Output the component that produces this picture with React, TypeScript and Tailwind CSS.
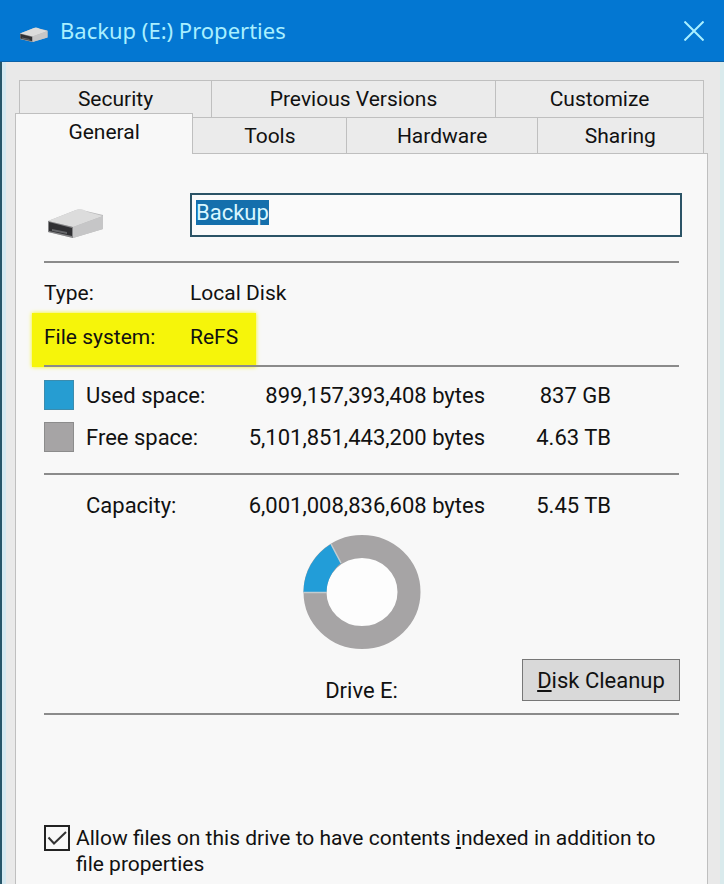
import { useEffect, useRef } from 'react';

interface TabProps {
  label: string;
  active?: boolean;
  className?: string;
}

interface SpaceRow {
  label: string;
  bytes: string;
  size: string;
  swatch: string;
}

const spaceRows: SpaceRow[] = [
  { label: 'Used space:', bytes: '899,157,393,408 bytes', size: '837 GB', swatch: 'bg-[#269dd2] border-[#3c8cae]' },
  { label: 'Free space:', bytes: '5,101,851,443,200 bytes', size: '4.63 TB', swatch: 'bg-[#a6a4a5] border-[#8c8c8c]' },
];

function Tab({ label, active, className = '' }: TabProps) {
  return (
    <button
      type="button"
      role="tab"
      aria-selected={!!active}
      className={`flex items-start justify-center border-[#bfbfbf] pt-0.5 text-[21px] leading-8 ${className}`}
    >
      {label}
    </button>
  );
}

function DriveIcon({ className }: { className: string }) {
  return (
    <svg viewBox="0 0 56 30" className={className} aria-hidden="true">
      <path d="M0 12 L28 1 Q31 0 34 1 L38 2 L55 6 L55 20 L25 29 L0 23 Z" fill="#b9b9ba" />
      <path d="M0 12 L28 1 Q32 -1 36 1 L40 3 L55 7 L25 18 Z" fill="#dcdcdc" />
      <path d="M25 18 L55 7 V20 L25 29 Z" fill="#c6c6c7" />
      <path d="M0 12 L25 18 V29 L0 23 Z" fill="#858587" />
      <path d="M1 13 L24 19 V27 L1 22 Z" fill="#303033" />
      <path d="M4 20 L19 23 V25 L4 22 Z" fill="#66676a" />
    </svg>
  );
}

function UsageRing() {
  return (
    <svg viewBox="0 0 118 114" className="h-[114px] w-[118px]" role="img" aria-label="Disk usage">
      <ellipse cx="59" cy="57" rx="47" ry="45.5" fill="#fdfdfd" stroke="#a6a4a5" strokeWidth="23" />
      <path d="M0.5 57 A58.5 57 0 0 1 28 9 L38 28 Q24 40 23.5 57 Z" fill="#229dd8" />
      <path d="M0.5 57.5 H23.5 M28 9 L38 28" stroke="#c3ccd0" strokeWidth="1.5" fill="none" />
    </svg>
  );
}

export default function App() {
  const nameRef = useRef<HTMLInputElement>(null);

  // The volume label starts out focused and selected
  useEffect(() => {
    nameRef.current?.focus();
    nameRef.current?.select();
  }, []);

  return (
    <div className="flex min-h-screen flex-col border-l-2 border-[#27566a] bg-[#e9e9e9] font-['Roboto',sans-serif] text-[22px] text-[#111]">
      {/* Title bar */}
      <header className="-ml-0.5 flex h-[62px] items-center border-b border-[#0b62a8] bg-[#0377d2] pr-5 pl-5 text-[#a9efff]">
        <DriveIcon className="mt-2 h-4 w-7" />
        <h1 className="ml-3 flex-1 font-['Noto_Sans',sans-serif] text-[22px]">Backup (E:) Properties</h1>
        <button type="button" aria-label="Close">
          <svg viewBox="0 0 20 20" className="h-5 w-5" fill="none" stroke="currentColor" strokeWidth="2">
            <path d="M0.5 0.5 L19.5 19.5 M19.5 0.5 L0.5 19.5" />
          </svg>
        </button>
      </header>

      <main className="flex flex-1 flex-col border-r-4 border-l-4 border-r-[#d9eaec] border-l-[#d5e9f1] pt-[18px] pr-3 pl-[9px]">
        <div role="tablist">
          <div className="mr-1 ml-1 grid h-[37px] grid-cols-[192fr_284fr_208fr] border-t border-l border-[#bfbfbf] bg-[#ebebeb]">
            <Tab label="Security" className="border-r" />
            <Tab label="Previous Versions" className="border-r" />
            <Tab label="Customize" className="border-r" />
          </div>
          <div className="mr-1 grid h-9 grid-cols-[178fr_154fr_190fr_166fr] bg-[#ebebeb]">
            <Tab label="General" active className="relative -mt-1 -mb-px border-t border-r border-l bg-[#f8f8f8]" />
            <Tab label="Tools" className="border-t border-r" />
            <Tab label="Hardware" className="border-t border-r" />
            <Tab label="Sharing" className="border-t border-r" />
          </div>
        </div>

        <section className="flex-1 border-t border-r border-l border-[#bfbfbf] bg-[#f8f8f8] px-7 pt-[39px]">
          <div className="-mr-[3px] flex items-start">
            <DriveIcon className="mt-4 ml-1 h-[30px] w-14" />
            <input
              ref={nameRef}
              type="text"
              aria-label="Volume label"
              defaultValue="Backup"
              className="ml-[86px] h-11 min-w-0 flex-1 border-2 border-[#2b5366] bg-[#fafafa] px-1 pb-1.5 outline-none selection:bg-[#146fac] selection:text-[#d8f6ff]"
            />
          </div>

          <dl className="mt-[22px] border-t-2 border-[#8b8b8b] pt-3 text-[21px]">
            <div className="flex h-[38px] items-center">
              <dt className="w-[146px]">Type:</dt>
              <dd>Local Disk</dd>
            </div>
            <div className="-ml-3 flex h-[54px] w-56 bg-[#f6f50a] pt-1 pl-3 leading-10 shadow-[0_0_4px_#f6f50a]">
              <dt className="w-[146px]">File system:</dt>
              <dd>ReFS</dd>
            </div>
          </dl>

          <table className="relative -mt-0.5 w-full table-fixed border-t-2 border-[#8b8b8b]">
            <colgroup>
              <col className="w-[42px]" />
              <col className="w-[120px]" />
              <col />
              <col className="w-[126px]" />
              <col className="w-[68px]" />
            </colgroup>
            <tbody>
              <tr className="h-2" />
              {spaceRows.map((row) => (
                <tr key={row.label} className="h-[42px]">
                  <td>
                    <span className={`block h-[30px] w-[30px] border ${row.swatch}`} />
                  </td>
                  <th scope="row" className="text-left font-normal whitespace-nowrap">{row.label}</th>
                  <td className="text-right whitespace-nowrap">{row.bytes}</td>
                  <td className="text-right">{row.size}</td>
                  <td />
                </tr>
              ))}
              <tr className="h-4" />
              <tr className="h-[61px] border-t-2 border-[#8b8b8b]">
                <td />
                <th scope="row" className="text-left font-normal">Capacity:</th>
                <td className="text-right whitespace-nowrap">6,001,008,836,608 bytes</td>
                <td className="text-right">5.45 TB</td>
                <td />
              </tr>
            </tbody>
          </table>

          <div className="flex flex-col items-center">
            <UsageRing />
          </div>
          <div className="mt-2.5 grid grid-cols-[1fr_auto_1fr] border-b-2 border-[#8b8b8b] pb-1.5">
            <p className="col-start-2 mt-4 leading-8">Drive E:</p>
            <button
              type="button"
              className="-mr-px h-[42px] w-[158px] justify-self-end border border-[#777] bg-[#d9d9d9]"
            >
              <span className="underline decoration-2 underline-offset-2">D</span>isk Cleanup
            </button>
          </div>

          <label className="mt-[110px] flex items-start gap-1.5 text-[21px] leading-[26px]">
            <span className="grid shrink-0">
              <input
                type="checkbox"
                defaultChecked
                className="col-start-1 row-start-1 h-[26px] w-[26px] appearance-none border-2 border-[#222]"
              />
              <svg
                viewBox="0 0 26 26"
                className="pointer-events-none col-start-1 row-start-1 h-[26px] w-[26px]"
                fill="none"
                stroke="#333"
                strokeWidth="2"
              >
                <path d="M4.5 12.5 L10 18.5 L22 7" />
              </svg>
            </span>
            <span>
              Allow files on this drive to have contents <span className="underline">i</span>ndexed in addition to file
              properties
            </span>
          </label>
        </section>
      </main>
    </div>
  );
}
